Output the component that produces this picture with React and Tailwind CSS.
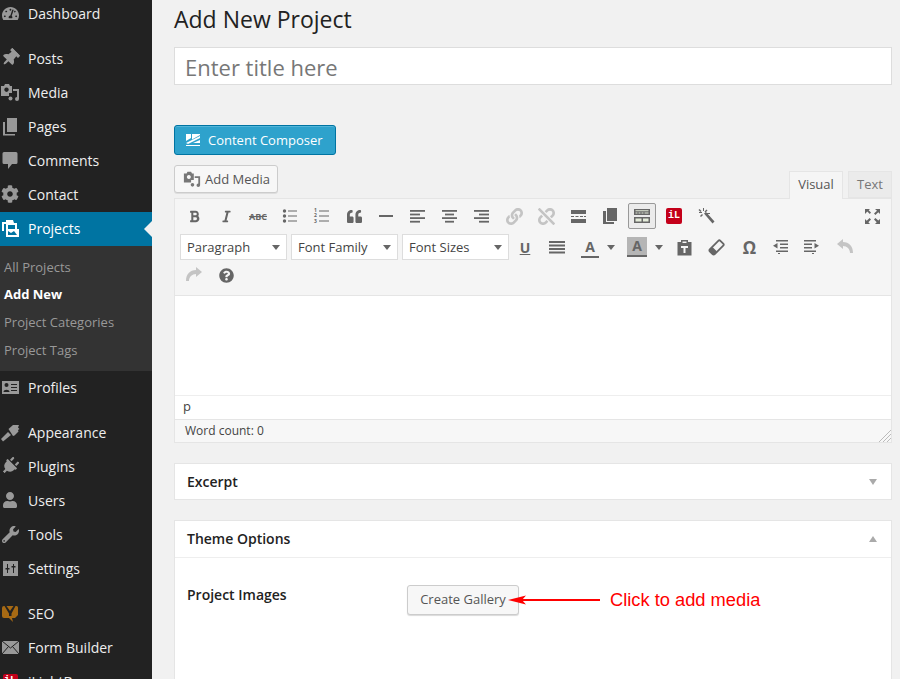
import React from 'react';
import { FaBold, FaItalic, FaLink, FaUnlink, FaQuoteLeft, FaThumbtack, FaCog, FaUser, FaWrench, FaPlug, FaTachometerAlt, FaQuestionCircle } from 'react-icons/fa';

const S = ({ children, size = 20, vb = 20, className = '' }) => (
  <svg width={size} height={size} viewBox={`0 0 ${vb} ${vb}`} className={className} fill="currentColor">{children}</svg>
);

const MediaIcon = ({ size = 20 }) => (
  <S size={size}>
    <path d="M1 4h3l1-2h4l1 2h2v7H9v3H1z M6.500 5.500a2.200 2.200 0 1 0 .01 0z" fillRule="evenodd" />
    <path d="M13 7h6v10a2 2 0 1 1-2-2V9h-4z" />
    <circle cx="10.500" cy="16.500" r="2" />
  </S>
);
const PagesIcon = () => (
  <S><path d="M7 2h10v14H7z" /><path d="M3 6h2v12h10v1.500H3z" /></S>
);
const CommentIcon = () => (
  <S><path d="M4 2h12a1.500 1.500 0 0 1 1.500 1.500v9A1.500 1.500 0 0 1 16 14h-4l-4 5v-5H4a1.500 1.500 0 0 1-1.500-1.500v-9A1.500 1.500 0 0 1 4 2z" /></S>
);
const BrushIcon = () => (
  <S><path d="M1 17l7-7 3 3-8 6.500z" /><path d="M8.500 7L13 3h6l-1 2.500L19.500 7 18 8l.5 1.500-4 4-1.500.5z" /></S>
);
const ProjectsIcon = () => (
  <S>
    <path d="M2 4h5v2H4v7H2z" fill="#fff" />
    <path d="M6 2h7l1 3h3v8H6z" fill="#fff" />
    <path d="M8 7h7v4H8z" fill="#0074a2" />
    <path d="M6 11h13v8H6z" fill="#fff" />
    <path d="M8 13l3 2 3-2 3 4H8z" fill="#0074a2" />
  </S>
);
const ProfileIcon = () => (
  <S>
    <path d="M2 4h17v13H2z" />
    <path d="M11 7h6v1h-6zM11 10h6v1h-6zM11 13h6v1h-6z" fill="#222" />
    <circle cx="6.500" cy="8" r="2" fill="#222" />
    <path d="M3.500 15c0-3 6-3 6 0z" fill="#222" />
  </S>
);
const SettingsIcon = () => (
  <S>
    <path d="M3 3h15v15H3z" />
    <path d="M7 6h1v9H7zM5.500 10h4v1.500h-4zM13 6h1v9h-1zM11.500 8h4v1.500h-4z" fill="#222" />
  </S>
);
const SeoIcon = () => (
  <S>
    <path d="M4 3h12.500a1.500 1.500 0 0 1 1.500 1.500V12l-3 3h-3l1 4-4-4H4a2 2 0 0 1-2-2V5a2 2 0 0 1 2-2z" fill="#a76a14" />
    <path d="M6.500 3l3.500 5 3.500-5h2L11.500 10.500V13H9v-2.500L4.500 3z" fill="#222" />
  </S>
);
const MailIcon = () => (
  <S>
    <path d="M2 4h17v13H2z" />
    <path d="M2 4l8.500 7L19 4M2 17l6.500-7.500M19 17l-6.500-7.500" fill="none" stroke="#222" strokeWidth="1" />
  </S>
);
const ILightIcon = ({ size = 18 }) => (
  <span className="flex items-center justify-center rounded-[2px] bg-[#c4001a] text-white font-['Liberation_Mono',monospace] font-bold text-[10px] leading-none" style={{ width: size, height: size }}>
    iL
  </span>
);
const UndoIcon = ({ className = '' }) => (
  <S size={18} vb={18} className={className}>
    <path d="M1 6l6-5v3c6 0 10 4 10 11h-3c0-4-3-7-7-7v3z" />
  </S>
);

const Nav = ({ icon, label, active, className = '' }) => (
  <div className={`relative flex h-[34px] items-center gap-2 pb-[2px] text-[14px] ${active ? 'bg-[#0074a2] text-white' : 'text-[#eeeeee]'} ${className}`}>
    <span className={`flex w-5 shrink-0 items-center justify-center ${active ? 'text-white' : 'text-[#999999]'}`}>{icon}</span>
    <span>{label}</span>
    {active && <span className="absolute right-0 top-[9px] h-0 w-0 border-y-[8px] border-r-[8px] border-y-transparent border-r-[#f1f1f1]" />}
  </div>
);

const Sub = ({ children, bold, className = '' }) => (
  <div className={`h-[28px] pl-1 text-[13px] leading-[28px] ${bold ? 'font-bold text-white' : 'text-[#999999]'} ${className}`}>{children}</div>
);

const Sidebar = () => (
  <aside className="h-[679px] w-[152px] shrink-0 overflow-hidden bg-[#222222]">
    <div className="-mt-[3px]">
      <Nav icon={<FaTachometerAlt size={17} />} label="Dashboard" />
    </div>
    <div className="mt-[11px]">
      <Nav icon={<FaThumbtack size={18} className="rotate-45" />} label="Posts" />
      <Nav icon={<MediaIcon />} label="Media" />
      <Nav icon={<PagesIcon />} label="Pages" />
      <Nav icon={<CommentIcon />} label="Comments" />
      <Nav icon={<FaCog size={18} />} label="Contact" />
      <Nav icon={<ProjectsIcon />} label="Projects" active />
    </div>
    <div className="h-[125px] bg-[#333333] pt-[7px]">
      <Sub>All Projects</Sub>
      <Sub bold className="-mt-px">Add New</Sub>
      <Sub>Project Categories</Sub>
      <Sub>Project Tags</Sub>
    </div>
    <Nav icon={<ProfileIcon />} label="Profiles" />
    <div className="mt-[11px]">
      <Nav icon={<BrushIcon />} label="Appearance" />
      <Nav icon={<FaPlug size={18} className="rotate-45" />} label="Plugins" />
      <Nav icon={<FaUser size={16} />} label="Users" />
      <Nav icon={<FaWrench size={17} />} label="Tools" />
      <Nav icon={<SettingsIcon />} label="Settings" />
    </div>
    <div className="mt-[11px]">
      <Nav icon={<SeoIcon />} label="SEO" />
      <Nav icon={<MailIcon />} label="Form Builder" />
      <Nav icon={<ILightIcon size={15} />} label="iLightBox" />
    </div>
  </aside>
);

const Tb = ({ children, w = 'w-8', dim, className = '' }) => (
  <span className={`flex h-[28px] shrink-0 items-center justify-center ${w} ${dim ? 'text-[#c4c4c4]' : 'text-[#666666]'} ${className}`}>{children}</span>
);

const Lines = ({ aligns }) => (
  <S size={16} vb={16}>
    {aligns.map(([x, w], i) => <rect key={i} x={x} y={2 + i * 3.6} width={w} height="1.800" />)}
  </S>
);

const Sel = ({ label }) => (
  <span className="flex h-[26px] w-[107px] shrink-0 items-center justify-between border border-[#dddddd] bg-white pl-[6px] pr-[6px] text-[13px] text-[#444444]">
    <span className="pt-[1px]">{label}</span>
    <span className="h-0 w-0 border-x-[4px] border-t-[5px] border-x-transparent border-t-[#666666]" />
  </span>
);

const Caret = ({ className = '' }) => (
  <span className={`h-0 w-0 border-x-[4px] border-t-[5px] border-x-transparent border-t-[#666666] ${className}`} />
);

const Toolbar = () => (
  <div className="h-[97px] border-b border-[#e5e5e5] bg-[#f5f5f5]">
    <div className="flex h-[34px] items-center justify-between pl-[3px] pr-[4px]">
      <div className="flex items-center">
        <Tb><FaBold size={13} /></Tb>
        <Tb><FaItalic size={13} /></Tb>
        <Tb><span className="text-[9px] font-bold leading-none line-through">ABC</span></Tb>
        <Tb>
          <S size={16} vb={16}>
            <circle cx="2.500" cy="3" r="1.700" /><circle cx="2.500" cy="8" r="1.700" /><circle cx="2.500" cy="13" r="1.700" />
            <path d="M6 2.500h9v1H6zM6 7.500h9v1H6zM6 12.500h9v1H6z" />
          </S>
        </Tb>
        <Tb>
          <span className="relative flex h-4 w-4 items-center">
            <span className="flex flex-col text-[5px] font-bold leading-[5.500px]"><span>1</span><span>2</span><span>3</span></span>
            <svg width="10" height="16" viewBox="0 0 10 16" fill="currentColor" className="ml-[2px]"><path d="M0 2.500h10v1H0zM0 7.500h10v1H0zM0 12.500h10v1H0z" /></svg>
          </span>
        </Tb>
        <Tb><FaQuoteLeft size={15} /></Tb>
        <Tb><S size={14} vb={14}><rect x="0" y="6" width="14" height="2" /></S></Tb>
        <Tb><Lines aligns={[[0, 15], [0, 10], [0, 15], [0, 10]]} /></Tb>
        <Tb><Lines aligns={[[0, 15], [3, 9], [0, 15], [3, 9]]} /></Tb>
        <Tb><Lines aligns={[[0, 15], [5, 10], [0, 15], [5, 10]]} /></Tb>
        <Tb dim><FaLink size={17} /></Tb>
        <Tb dim><FaUnlink size={17} /></Tb>
        <Tb>
          <S size={15} vb={15}><path d="M0 1h15v4H0zM0 10h15v4H0zM0 7h3v1H0zM4.500 7h3v1h-3zM9 7h3v1H9zM13 7h2v1h-2z" /></S>
        </Tb>
        <Tb>
          <S size={16} vb={16}><path d="M5 0h10v13H5z" /><path d="M1 3h3v11h8v2H1z" /></S>
        </Tb>
        <span className="mx-[2px] flex h-[26px] w-[28px] shrink-0 items-center justify-center rounded-[2px] border border-[#999999] bg-[#ebebeb] text-[#666666]">
          <S size={20} vb={20}>
            <path d="M2 3h16v6H2zM2 11h16v6H2z" />
            <path d="M3.500 4.200h13v1h-13zM3.500 6.500h2v1h-2zM6.500 6.500h2v1h-2zM9.500 6.500h2v1h-2zM12.500 6.500h4v1h-4zM3.500 12.500h6v3h-6zM11 12.500h5.500v3H11z" fill="#e4ecd9" />
          </S>
        </span>
        <Tb><ILightIcon size={16} /></Tb>
        <Tb>
          <S size={17} vb={17}>
            <path d="M6 5.500l2-1.500 8.500 9.500-2 2z" />
            <path d="M1 4h3v1H1zM5 0h1v3H5zM8.500 1.500l1 1-2 2-1-1zM1.500 1l2 2-1 1-2-2zM2 8l2-2 1 1-2 2zM9 5h3v1H9z" />
          </S>
        </Tb>
      </div>
      <Tb w="w-[30px]">
        <S size={17} vb={17}>
          <path d="M1 1h5L4.700 2.300 7 4.600 5.800 6 3.300 3.600 1 6zM16 1v5l-1.700-1.700L11.400 7 10 5.600l3-2.900L11 1zM1 16v-5l1.700 1.700L5.600 10 7 11.400l-2.600 2.900L6 16zM16 16h-5l1.700-1.700L10 11.400l1.400-1.400 2.900 2.600L16 11z" />
        </S>
      </Tb>
    </div>
    <div className="flex h-[28px] items-center pl-[5px]">
      <div className="flex gap-1">
        <Sel label="Paragraph" /><Sel label="Font Family" /><Sel label="Font Sizes" />
      </div>
      <Tb><span className="text-[14px] font-bold leading-[13px] underline">U</span></Tb>
      <Tb>
        <S size={16} vb={16}><path d="M0 2h16v2H0zM0 5.500h16v2H0zM0 9h16v2H0zM0 12.500h16v2H0z" /></S>
      </Tb>
      <span className="flex h-[26px] w-[48px] shrink-0 items-center pl-[8px] text-[#666666]">
        <span className="w-[18px] border-b-2 border-[#666666] text-center text-[14px] font-bold leading-[19px]">A</span>
        <Caret className="ml-[8px]" />
      </span>
      <span className="flex h-[26px] w-[48px] shrink-0 items-center pl-[6px] text-[#666666]">
        <span className="h-5 w-5 border-b-2 border-[#666666] bg-[#b5b5b5] text-center text-[14px] font-bold leading-[18px]">A</span>
        <Caret className="ml-[8px]" />
      </span>
      <Tb w="w-[31px]">
        <S size={17} vb={17}>
          <path fillRule="evenodd" d="M1.500 3H5V1h7v2h3.500v13.500h-14zM5 7v2h2.500v5h2V9H12V7zM6.500 2.500v1.500h4V2.500z" />
        </S>
      </Tb>
      <Tb>
        <S size={17} vb={17}>
          <g transform="rotate(-45 8.500 8.500)">
            <rect x="1" y="5" width="15" height="7" rx="1.500" fill="none" stroke="currentColor" strokeWidth="1.800" />
            <rect x="1" y="5" width="5" height="7" rx="1" />
          </g>
        </S>
      </Tb>
      <Tb className="pl-[3px]"><span className="text-[17px] font-bold leading-none">Ω</span></Tb>
      <Tb>
        <S size={16} vb={16}><path d="M4 1h12v1.500H4zM8 4.500h8V6H8zM8 8h8v1.500H8zM4 11.500h12V13H4zM6 14h2v1H6zM5.500 4v5.500L1 6.800z" /></S>
      </Tb>
      <Tb>
        <S size={16} vb={16}><path d="M0 1h12v1.500H0zM0 4.500h8V6H0zM0 8h8v1.500H0zM0 11.500h12V13H0zM8 14h2v1H8zM10.500 4v5.500L15 6.800z" /></S>
      </Tb>
      <Tb dim className="pl-[2px]"><UndoIcon /></Tb>
    </div>
    <div className="flex h-[28px] items-center pl-[3px]">
      <Tb dim><UndoIcon className="-scale-x-100" /></Tb>
      <Tb><FaQuestionCircle size={15} /></Tb>
    </div>
  </div>
);

const Editor = () => (
  <div className="h-[245px] border border-[#e5e5e5] bg-white">
    <Toolbar />
    <div className="h-[100px] border-b border-[#eeeeee] bg-white" />
    <div className="h-[23px] pl-2 text-[13px] leading-[21px] text-[#444444]">p</div>
    <div className="relative h-[23px] border-t border-[#e5e5e5] bg-[#f7f7f7] pl-[10px] text-[12px] leading-[21px] text-[#444444]">
      Word count: 0
      <svg width="12" height="12" viewBox="0 0 12 12" className="absolute bottom-0 right-0" stroke="#bbbbbb" strokeWidth="1">
        <path d="M0 12L12 0M4 12L12 4M8 12L12 8" />
      </svg>
    </div>
  </div>
);

const Box = ({ title, up, children, h }) => (
  <div className={`border border-[#e5e5e5] bg-white ${h}`}>
    <div className={`flex items-center justify-between pl-3 pr-[14px] text-[14px] font-semibold text-[#222222] ${children ? 'h-[37px] border-b border-[#eeeeee]' : 'h-[36px]'}`}>
      <span className="pb-[2px]">{title}</span>
      {up
        ? <span className="h-0 w-0 border-x-[4px] border-b-[6px] border-x-transparent border-b-[#aaaaaa]" />
        : <span className="h-0 w-0 border-x-[4px] border-t-[6px] border-x-transparent border-t-[#aaaaaa]" />}
    </div>
    {children}
  </div>
);

export default function App() {
  return (
    <div className="flex h-[679px] w-[900px] overflow-hidden bg-[#f1f1f1] font-['Open_Sans',sans-serif]">
      <Sidebar />
      <main className="h-[679px] w-[748px] overflow-hidden pl-[22px] pr-[8px]">
        <h1 className="h-[40px] text-[23px] leading-[38px] text-[#222222]">Add New Project</h1>
        <div className="mt-[7px] flex h-[38px] items-center border border-[#dddddd] bg-white pl-[10px] pt-[2px] text-[22px] text-[#777777]">Enter title here</div>
        <div className="mt-[40px] flex h-[30px] w-[162px] items-center gap-[6px] rounded-[3px] border border-[#0074a2] bg-[#2ea2cc] pl-[10px] text-[13px] text-white shadow-[inset_0_1px_0_rgba(120,200,230,0.5)]">
          <S size={16} vb={16}>
            <path d="M1 2h5v4L1 9zM7 2h8v1L7 7.500zM1 13h14v1H1zM1 11l14-7v2L3 12zM8 11l7-3v3z" />
          </S>
          <span className="pl-px pt-[2px]">Content Composer</span>
        </div>
        <div className="mt-[10px] flex h-[33px] items-start justify-between">
          <div className="flex h-[28px] w-[104px] items-center gap-1 rounded-[3px] border border-[#cccccc] bg-[#f7f7f7] pl-2 text-[13px] text-[#555555] shadow-[0_1px_0_rgba(0,0,0,0.08)]">
            <span className="text-[#777777]"><MediaIcon size={18} /></span>
            <span className="pt-[2px]">Add Media</span>
          </div>
          <div className="flex h-[33px] items-end gap-[5px]">
            <div className="relative z-10 -mb-px flex h-[28px] w-[54px] items-center justify-center border border-b-0 border-[#e5e5e5] bg-[#f5f5f5] pb-[2px] text-[13px] text-[#555555]">Visual</div>
            <div className="flex h-[27px] w-[44px] items-center justify-center border border-[#e5e5e5] bg-[#ebebeb] text-[13px] text-[#777777]">Text</div>
          </div>
        </div>
        <Editor />
        <div className="mt-[20px]"><Box title="Excerpt" h="h-[37px]" /></div>
        <div className="mt-[20px]">
          <Box title="Theme Options" up h="h-[200px]">
            <div className="flex items-start pl-3 pt-[27px]">
              <div className="w-[220px] text-[14px] font-semibold leading-[20px] text-[#222222]">Project Images</div>
              <div className="relative flex items-center">
                <div className="flex h-[30px] w-[112px] items-center justify-center rounded-[3px] border border-[#cccccc] bg-[#f7f7f7] text-[13px] text-[#555555] shadow-[0_1px_1px_rgba(0,0,0,0.15)]">Create Gallery</div>
                <svg width="92" height="12" viewBox="0 0 92 12" className="absolute left-[101px] top-[9px]">
                  <path d="M14 6H92" stroke="#ff0000" strokeWidth="2" />
                  <path d="M0 6L18 1.500L14 6L18 10.500Z" fill="#ff0000" />
                </svg>
                <span className="ml-[91px] font-['Liberation_Sans',sans-serif] text-[18.300px] text-[#ff0000]">Click to add media</span>
              </div>
            </div>
          </Box>
        </div>
      </main>
    </div>
  );
}
